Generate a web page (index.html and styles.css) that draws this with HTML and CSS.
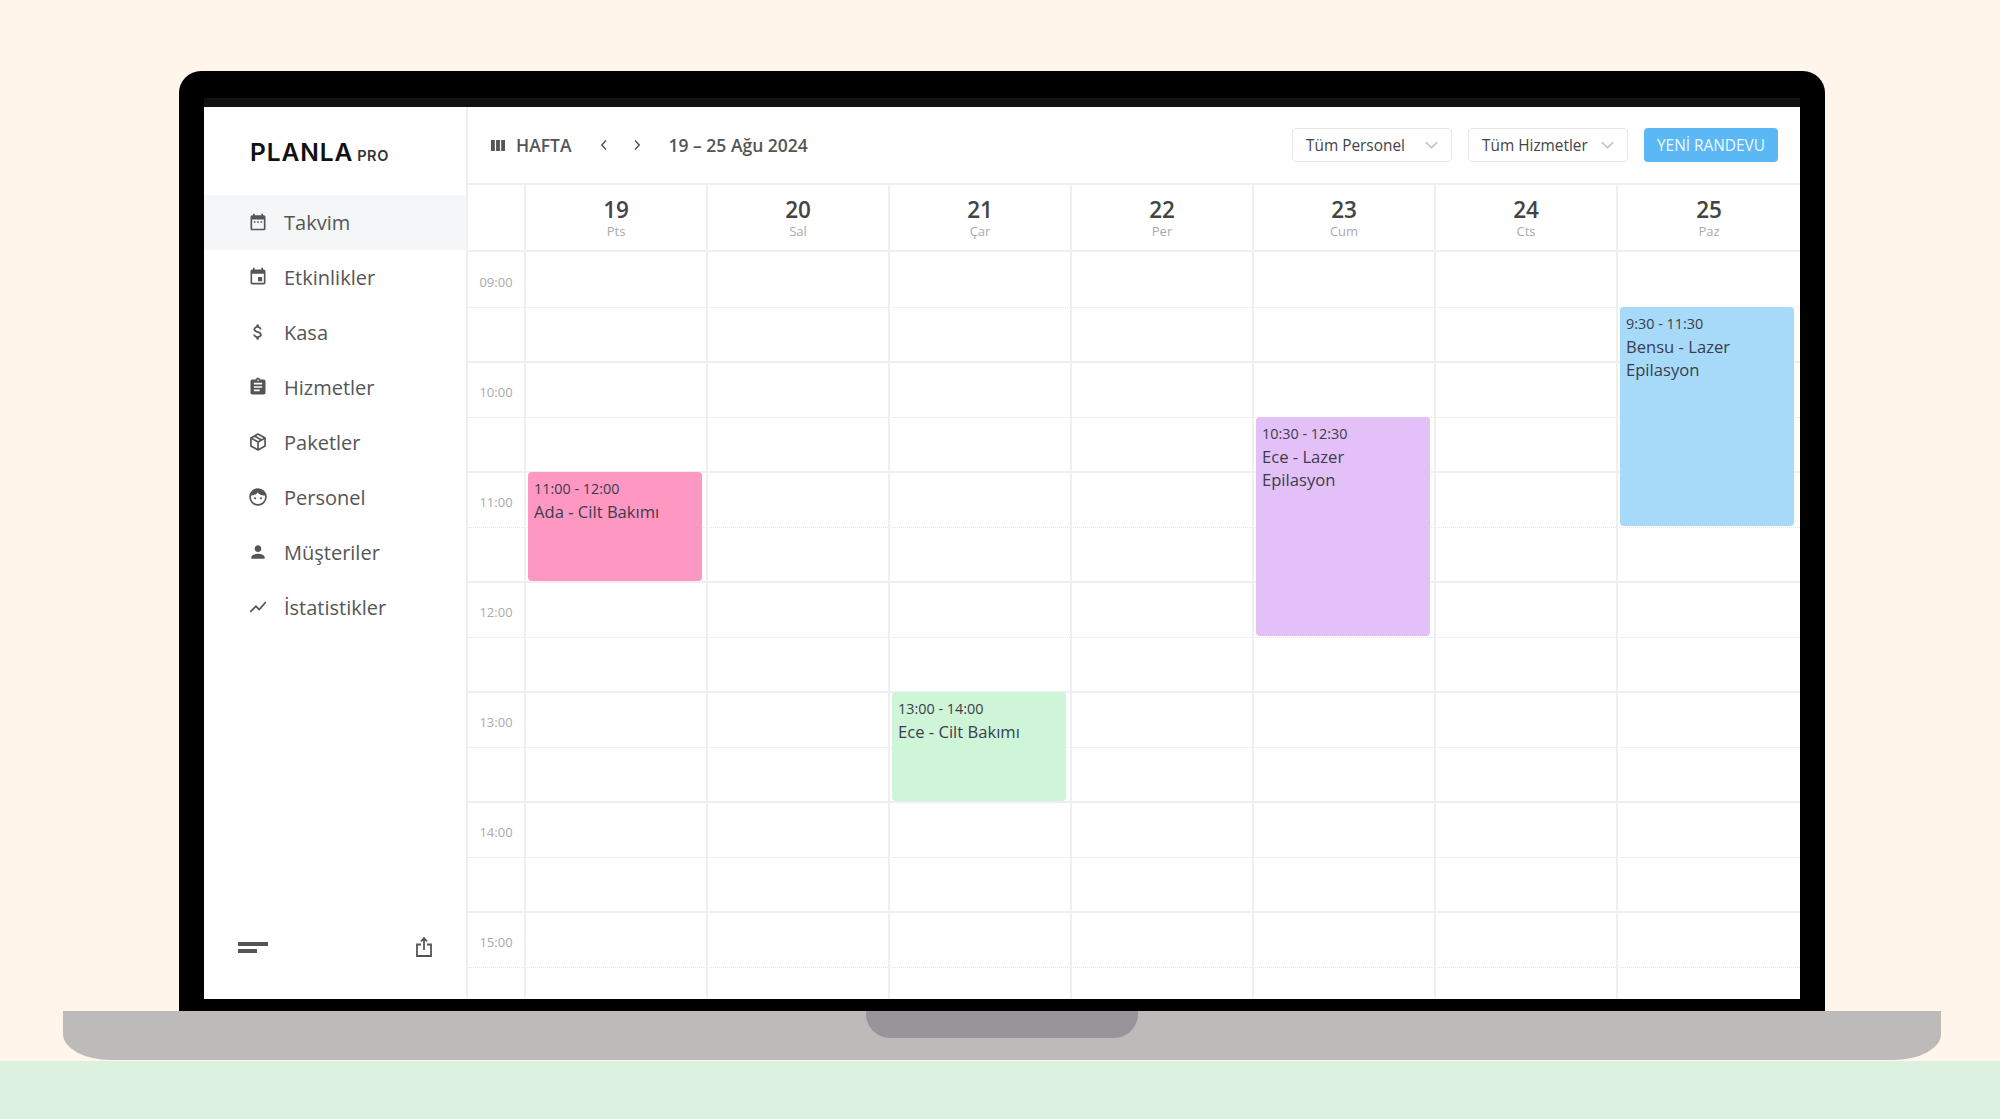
FILE: index.html
```html
<!DOCTYPE html>
<html lang="tr">
<head>
  <meta charset="UTF-8">
  <title>Planla Pro</title>
  <link rel="stylesheet" href="styles.css">
</head>
<body>

  <div class="stage">
    <div class="bezel">
      <div class="camera-bar"></div>
      <div class="screen">

        <aside class="sidebar">
          <div class="logo">PLANLA<small>PRO</small></div>
          <nav class="nav">
            <a class="nav-item active">
              <svg class="nav-icon" viewBox="0 0 24 24"><path d="M9 11H7v2h2v-2zm4 0h-2v2h2v-2zm4 0h-2v2h2v-2zm2-7h-1V2h-2v2H8V2H6v2H5c-1.11 0-1.99.9-1.99 2L3 20c0 1.1.89 2 2 2h14c1.1 0 2-.9 2-2V6c0-1.1-.9-2-2-2zm0 16H5V9h14v11z"/></svg>
              Takvim
            </a>
            <a class="nav-item">
              <svg class="nav-icon" viewBox="0 0 24 24"><path d="M17 12h-5v5h5v-5zM16 1v2H8V1H6v2H5c-1.11 0-1.99.9-1.99 2L3 19c0 1.1.89 2 2 2h14c1.1 0 2-.9 2-2V5c0-1.1-.9-2-2-2h-1V1h-2zm3 18H5V8h14v11z"/></svg>
              Etkinlikler
            </a>
            <a class="nav-item">
              <svg class="nav-icon" viewBox="0 0 24 24"><path d="M11.8 10.9c-2.27-.59-3-1.2-3-2.15 0-1.09 1.01-1.85 2.7-1.85 1.78 0 2.44.85 2.5 2.1h2.21c-.07-1.72-1.12-3.3-3.21-3.81V3h-3v2.16c-1.94.42-3.5 1.68-3.5 3.61 0 2.31 1.91 3.46 4.7 4.13 2.5.6 3 1.48 3 2.41 0 .69-.49 1.79-2.7 1.79-2.06 0-2.87-.92-2.98-2.1h-2.2c.12 2.19 1.76 3.42 3.68 3.83V21h3v-2.15c1.95-.37 3.5-1.5 3.5-3.55 0-2.84-2.43-3.81-4.7-4.4z"/></svg>
              Kasa
            </a>
            <a class="nav-item">
              <svg class="nav-icon" viewBox="0 0 24 24"><path d="M19 3h-4.18C14.4 1.84 13.3 1 12 1c-1.3 0-2.4.84-2.82 2H5c-1.1 0-2 .9-2 2v14c0 1.1.9 2 2 2h14c1.1 0 2-.9 2-2V5c0-1.1-.9-2-2-2zm-7 0c.55 0 1 .45 1 1s-.45 1-1 1-1-.45-1-1 .45-1 1-1zm2 14H7v-2h7v2zm3-4H7v-2h10v2zm0-4H7V7h10v2z"/></svg>
              Hizmetler
            </a>
            <a class="nav-item">
              <svg class="nav-icon line" viewBox="0 0 24 24"><path d="M12 2.5l8.5 4.7v9.6L12 21.5l-8.5-4.7V7.2zM3.5 7.2L12 12l8.5-4.8M12 12v9.5M7.8 4.9l8.5 4.8"/></svg>
              Paketler
            </a>
            <a class="nav-item">
              <svg class="nav-icon line" viewBox="0 0 24 24"><circle cx="12" cy="12" r="9.5"/><path class="hair" d="M3 10c3 .5 6.500-.5 8.500-3.500 2 3 6 4 9.500 3.500-1-4.500-5-7.500-9-7.500S4 5.500 3 10z"/><circle class="eye" cx="8.500" cy="13.500" r="1.300"/><circle class="eye" cx="15.500" cy="13.500" r="1.300"/></svg>
              Personel
            </a>
            <a class="nav-item">
              <svg class="nav-icon" viewBox="0 0 24 24"><path d="M12 12c2.210 0 4-1.790 4-4s-1.790-4-4-4-4 1.790-4 4 1.790 4 4 4zm0 2c-2.670 0-8 1.340-8 4v2h16v-2c0-2.660-5.330-4-8-4z"/></svg>
              Müşteriler
            </a>
            <a class="nav-item">
              <svg class="nav-icon" viewBox="0 0 24 24"><path d="M3.500 18.490l6-6.010 4 4L22 6.920l-1.410-1.410-7.090 7.970-4-4L2 16.990z"/></svg>
              İstatistikler
            </a>
          </nav>
          <div class="side-tools">
            <div class="collapse-icon"><span></span><span></span></div>
            <svg class="share-icon" viewBox="0 0 16 20"><path d="M5 7.500H1v11.500h14V7.500h-4M8 13V1.500M5 4.500l3-3.500 3 3.500"/></svg>
          </div>
        </aside>

        <main class="main">
          <header class="topbar">
            <svg class="week-icon" viewBox="0 0 14 11"><path d="M0 0h3.800v11H0zM5.100 0h3.800v11H5.100zM10.200 0H14v11h-3.800z"/></svg>
            <span class="view-name">HAFTA</span>
            <svg class="chevron prev" viewBox="0 0 8 12"><path d="M6 1.500L1.800 6 6 10.500"/></svg>
            <svg class="chevron next" viewBox="0 0 8 12"><path d="M2 1.500L6.200 6 2 10.500"/></svg>
            <span class="range">19 – 25 Ağu 2024</span>
            <div class="select">Tüm Personel<svg viewBox="0 0 14 8"><path d="M1 1l6 6 6-6"/></svg></div>
            <div class="select">Tüm Hizmetler<svg viewBox="0 0 14 8"><path d="M1 1l6 6 6-6"/></svg></div>
            <button class="new-btn">YENİ RANDEVU</button>
          </header>

          <div class="day-head">
            <div class="day-corner"></div>
            <div class="day"><b>19</b><span>Pts</span></div>
            <div class="day"><b>20</b><span>Sal</span></div>
            <div class="day"><b>21</b><span>Çar</span></div>
            <div class="day"><b>22</b><span>Per</span></div>
            <div class="day"><b>23</b><span>Cum</span></div>
            <div class="day"><b>24</b><span>Cts</span></div>
            <div class="day"><b>25</b><span>Paz</span></div>
          </div>

          <div class="cal-body">
            <div class="hour"><span>09:00</span></div>
            <div class="hour"><span>10:00</span></div>
            <div class="hour"><span>11:00</span></div>
            <div class="hour"><span>12:00</span></div>
            <div class="hour"><span>13:00</span></div>
            <div class="hour"><span>14:00</span></div>
            <div class="hour"><span>15:00</span></div>

            <!-- gunler saat satirlarinin ustune biniyor -->
            <div class="day-cols">
              <div class="col">
                <div class="event pink ev-1100"><p class="ev-time">11:00 - 12:00</p><p>Ada - Cilt Bakımı</p></div>
              </div>
              <div class="col"></div>
              <div class="col">
                <div class="event green ev-1300"><p class="ev-time">13:00 - 14:00</p><p>Ece - Cilt Bakımı</p></div>
              </div>
              <div class="col"></div>
              <div class="col">
                <div class="event purple ev-1030"><p class="ev-time">10:30 - 12:30</p><p>Ece - Lazer Epilasyon</p></div>
              </div>
              <div class="col"></div>
              <div class="col">
                <div class="event blue ev-0930"><p class="ev-time">9:30 - 11:30</p><p>Bensu - Lazer Epilasyon</p></div>
              </div>
            </div>
          </div>
        </main>

      </div>
    </div>
    <div class="base"><div class="notch"></div></div>
  </div>
  <div class="floor"></div>

</body>
</html>
```

FILE: styles.css
```css
* {
  box-sizing: border-box;
}
html, body {
  height: 100%;
}
body {
  margin: 0;
  background: #fff5ea;
  font-family: "Open Sans", sans-serif;
  color: #555;
  display: flex;
  flex-direction: column;
  overflow: hidden;
}
p {
  margin: 0;
}

/* laptop */
.stage {
  height: 1061px;
  padding-top: 71px;
}
.bezel {
  width: 1646px;
  height: 940px;
  margin-left: 179px;
  padding: 27px 25px 12px;
  background: #000;
  border-radius: 22px 22px 0 0;
  display: flex;
  flex-direction: column;
}
.camera-bar {
  height: 9px;
  background: #111;
}
.screen {
  flex: 1;
  min-height: 0;
  background: #fff;
  display: flex;
}
.base {
  width: 1878px;
  height: 49px;
  margin-left: 63px;
  background: #bdbbba;
  border-radius: 0 0 48px 48px / 0 0 26px 26px;
  display: flex;
  justify-content: center;
}
.notch {
  width: 272px;
  height: 27px;
  background: #97959a;
  border-radius: 0 0 24px 24px;
}
.floor {
  flex: 1;
  background: #dcf1e0;
}

/* sidebar */
.sidebar {
  width: 264px;
  border-right: 2px solid #eeeff0;
  display: flex;
  flex-direction: column;
}
.logo {
  height: 88px;
  padding: 30px 0 0 46px;
  font-family: Inter, sans-serif;
  font-size: 24.500px;
  font-weight: 600;
  letter-spacing: 0.900px;
  line-height: 30px;
  color: #111;
}
.logo small {
  font-size: 14.500px;
  letter-spacing: 0.600px;
  margin-left: 4px;
  color: #333;
}
.nav {
  flex: 1;
}
.nav-item {
  height: 55px;
  padding-left: 44px;
  padding-bottom: 1px;
  display: flex;
  align-items: center;
  gap: 16px;
  font-size: 20px;
  color: #555;
}
.nav-item.active {
  background: #f4f6f7;
}
.nav-icon {
  width: 20px;
  height: 20px;
  fill: #555;
}
.nav-icon.line {
  fill: none;
  stroke: #555;
  stroke-width: 2;
  stroke-linejoin: round;
}
.nav-icon .hair,
.nav-icon .eye {
  fill: #555;
  stroke: none;
}
.side-tools {
  display: flex;
  justify-content: space-between;
  align-items: center;
  padding: 0 34px;
  margin-bottom: 42px;
}
.collapse-icon span {
  display: block;
  height: 4px;
  width: 30px;
  margin-bottom: 3px;
  background: #555;
}
.collapse-icon span + span {
  width: 19px;
  margin-bottom: 0;
}
.share-icon {
  width: 16px;
  height: 20px;
  fill: none;
  stroke: #555;
  stroke-width: 1.800;
}

/* topbar */
.main {
  flex: 1;
  min-width: 0;
  display: flex;
  flex-direction: column;
}
.topbar {
  height: 78px;
  flex: none;
  padding: 0 22px 0 23px;
  border-bottom: 2px solid #eeeff0;
  display: flex;
  align-items: center;
  font-weight: 600;
  font-size: 17.500px;
  color: #555;
}
.week-icon {
  width: 14px;
  height: 11px;
  fill: #555;
  margin-right: 11px;
}
.chevron {
  width: 8px;
  height: 12px;
  fill: none;
  stroke: #555;
  stroke-width: 1.500;
}
.chevron.prev {
  margin-left: 28px;
}
.chevron.next {
  margin-left: 25px;
}
.range {
  margin-left: 28px;
  margin-right: auto;
}
.select {
  width: 160px;
  height: 34px;
  margin-right: 16px;
  padding: 0 13px 0 13px;
  border: 1px solid #e6e8ea;
  border-radius: 4px;
  display: flex;
  align-items: center;
  justify-content: space-between;
  font-size: 15.400px;
  font-weight: 400;
  color: #444;
}
.select svg {
  width: 13px;
  height: 8px;
  fill: none;
  stroke: #bbb;
  stroke-width: 1.500;
}
.new-btn {
  width: 134px;
  height: 34px;
  border: 0;
  border-radius: 4px;
  background: #5bb8f5;
  color: #eef8ff;
  font-family: inherit;
  font-size: 15.400px;
}

/* takvim */
.day-head {
  height: 67px;
  flex: none;
  display: grid;
  grid-template-columns: 56px repeat(6, 182px) 1fr;
  border-bottom: 2px solid #eeeff0;
}
.day {
  border-left: 2px solid #eeeff0;
  display: flex;
  flex-direction: column;
  align-items: center;
  padding-top: 11px;
}
.day b {
  font-size: 22.500px;
  line-height: 27px;
  font-weight: 600;
  color: #444;
}
.day span {
  font-size: 13px;
  line-height: 16px;
  color: #aaa;
}
.cal-body {
  flex: 1;
  min-height: 0;
  padding-top: 1px;
  position: relative;
  overflow: hidden;
}
.hour {
  height: 110px;
  border-bottom: 2px solid #eeeff0;
  position: relative;
}
.hour::after {
  content: "";
  position: absolute;
  left: 0;
  right: 0;
  top: 54px;
  border-top: 1px dotted #e4e4e4;
}
.hour span {
  display: block;
  width: 56px;
  padding-top: 20px;
  text-align: center;
  font-size: 13px;
  line-height: 18px;
  color: #aaa;
}
.day-cols {
  position: absolute;
  top: 0;
  bottom: 0;
  left: 56px;
  right: 0;
  display: grid;
  grid-template-columns: repeat(6, 182px) 1fr;
}
.col {
  border-left: 2px solid #eeeff0;
  position: relative;
}
.event {
  position: absolute;
  left: 2px;
  right: 4px;
  padding: 6px 24px 0 6px;
  border-radius: 4px;
  font-size: 16.600px;
  line-height: 23.500px;
  color: #3c3c4c;
}
.ev-time {
  font-size: 14.400px;
  line-height: 21.500px;
}
.ev-0930 { top: 55px; height: 219px; }
.ev-1030 { top: 165px; height: 219px; }
.ev-1100 { top: 220px; height: 109px; }
.ev-1300 { top: 440px; height: 109px; }
.pink { background: #fe97c2; }
.green { background: #cff5d9; }
.purple { background: #e3c1f8; }
.blue { background: #a6daf8; right: 6px; }
```
